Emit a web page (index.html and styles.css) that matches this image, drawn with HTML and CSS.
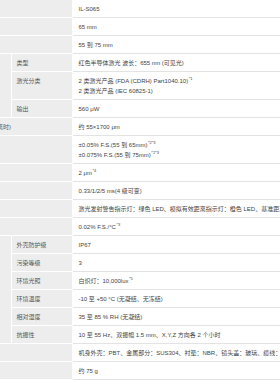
FILE: index.html
```html
<!DOCTYPE html>
<html lang="zh-CN">
<head>
<meta charset="utf-8">
<title>IL-S065 规格</title>
<link rel="stylesheet" href="styles.css">
</head>
<body>
<div class="viewport">
<table class="spec">
  <colgroup>
    <col class="c-group">
    <col class="c-label">
    <col class="c-value">
  </colgroup>
  <tbody>
    <tr><th class="lab" colspan="2">型号</th><td class="val">IL-S065</td></tr>
    <tr><th class="lab" colspan="2">基准距离</th><td class="val">65 mm</td></tr>
    <tr><th class="lab" colspan="2">测量范围</th><td class="val">55 到 75 mm</td></tr>
    <tr><th class="lab grp" rowspan="3">光源</th><th class="lab sub">类型</th><td class="val">红色半导体激光 波长：655 nm (可见光)</td></tr>
    <tr><th class="lab sub">激光分类</th><td class="val">2 类激光产品 (FDA (CDRH) Part1040.10)<sup>*1</sup><br>2 类激光产品 (IEC 60825-1)</td></tr>
    <tr><th class="lab sub">输出</th><td class="val">560 μW</td></tr>
    <tr><th class="lab" colspan="2">光点直径(在基准距离时)</th><td class="val">约 55×1700 μm</td></tr>
    <tr><th class="lab" colspan="2">线性度</th><td class="val">±0.05% F.S.(55 到 65mm)<sup>*2*3</sup><br>±0.075% F.S.(55 到 75mm)<sup>*2*3</sup></td></tr>
    <tr><th class="lab" colspan="2">重复精度</th><td class="val">2 μm<sup>*4</sup></td></tr>
    <tr><th class="lab" colspan="2">采样周期</th><td class="val">0.33/1/2/5 ms(4 级可变)</td></tr>
    <tr><th class="lab" colspan="2">指示灯</th><td class="val">激光发射警告指示灯：绿色 LED、模拟有效距离指示灯：橙色 LED、基准距离指示灯：红色 LED</td></tr>
    <tr><th class="lab" colspan="2">温度特性</th><td class="val">0.02% F.S./°C<sup>*3</sup></td></tr>
    <tr><th class="lab grp" rowspan="6">耐环境性</th><th class="lab sub">外壳防护级</th><td class="val">IP67</td></tr>
    <tr><th class="lab sub">污染等级</th><td class="val">3</td></tr>
    <tr><th class="lab sub">环境光照</th><td class="val">白炽灯：10,000lux<sup>*5</sup></td></tr>
    <tr><th class="lab sub">环境温度</th><td class="val">-10 至 +50 °C (无凝结、无冻结)</td></tr>
    <tr><th class="lab sub">相对湿度</th><td class="val">35 至 85 % RH (无凝结)</td></tr>
    <tr><th class="lab sub">抗振性</th><td class="val">10 至 55 Hz、双振幅 1.5 mm、X,Y,Z 方向各 2 个小时</td></tr>
    <tr><th class="lab" colspan="2">材质</th><td class="val">机身外壳：PBT、金属部分：SUS304、衬垫：NBR、镜头盖：玻璃、缆线：PVC</td></tr>
    <tr><th class="lab" colspan="2">重量</th><td class="val">约 75 g</td></tr>
  </tbody>
</table>
</div>
</body>
</html>
```

FILE: styles.css
```css
html, body {
  margin: 0;
  padding: 0;
  overflow: hidden;
  background: #ffffff;
}

.viewport {
  width: 280px;
  height: 380px;
  overflow: hidden;
}

.spec {
  margin-left: -58px;
  width: 658px;
  table-layout: fixed;
  border-collapse: collapse;
  font-family: "Liberation Sans", "Noto Sans CJK SC", sans-serif;
  font-size: 6px;
  line-height: 10px;
  color: #444444;
}

.c-group { width: 69px; }
.c-label { width: 61px; }
.c-value { width: 528px; }

.lab {
  background: #ededed;
  font-weight: normal;
  text-align: left;
  vertical-align: top;
  padding: 4px 5px 3px 5px;
  border-bottom: 1px solid #ffffff;
  border-right: 1px solid #ffffff;
  color: #555555;
  white-space: nowrap;
  overflow: hidden;
}

.sub {
  padding-left: 5px;
}

.val {
  background: #ffffff;
  vertical-align: top;
  padding: 4px 6px 3px 6px;
  border-bottom: 1px solid #e3e3e3;
  white-space: nowrap;
  overflow: hidden;
}

.val sup {
  font-size: 4px;
  line-height: 0;
  vertical-align: 3px;
  margin-left: 0.5px;
}
```
